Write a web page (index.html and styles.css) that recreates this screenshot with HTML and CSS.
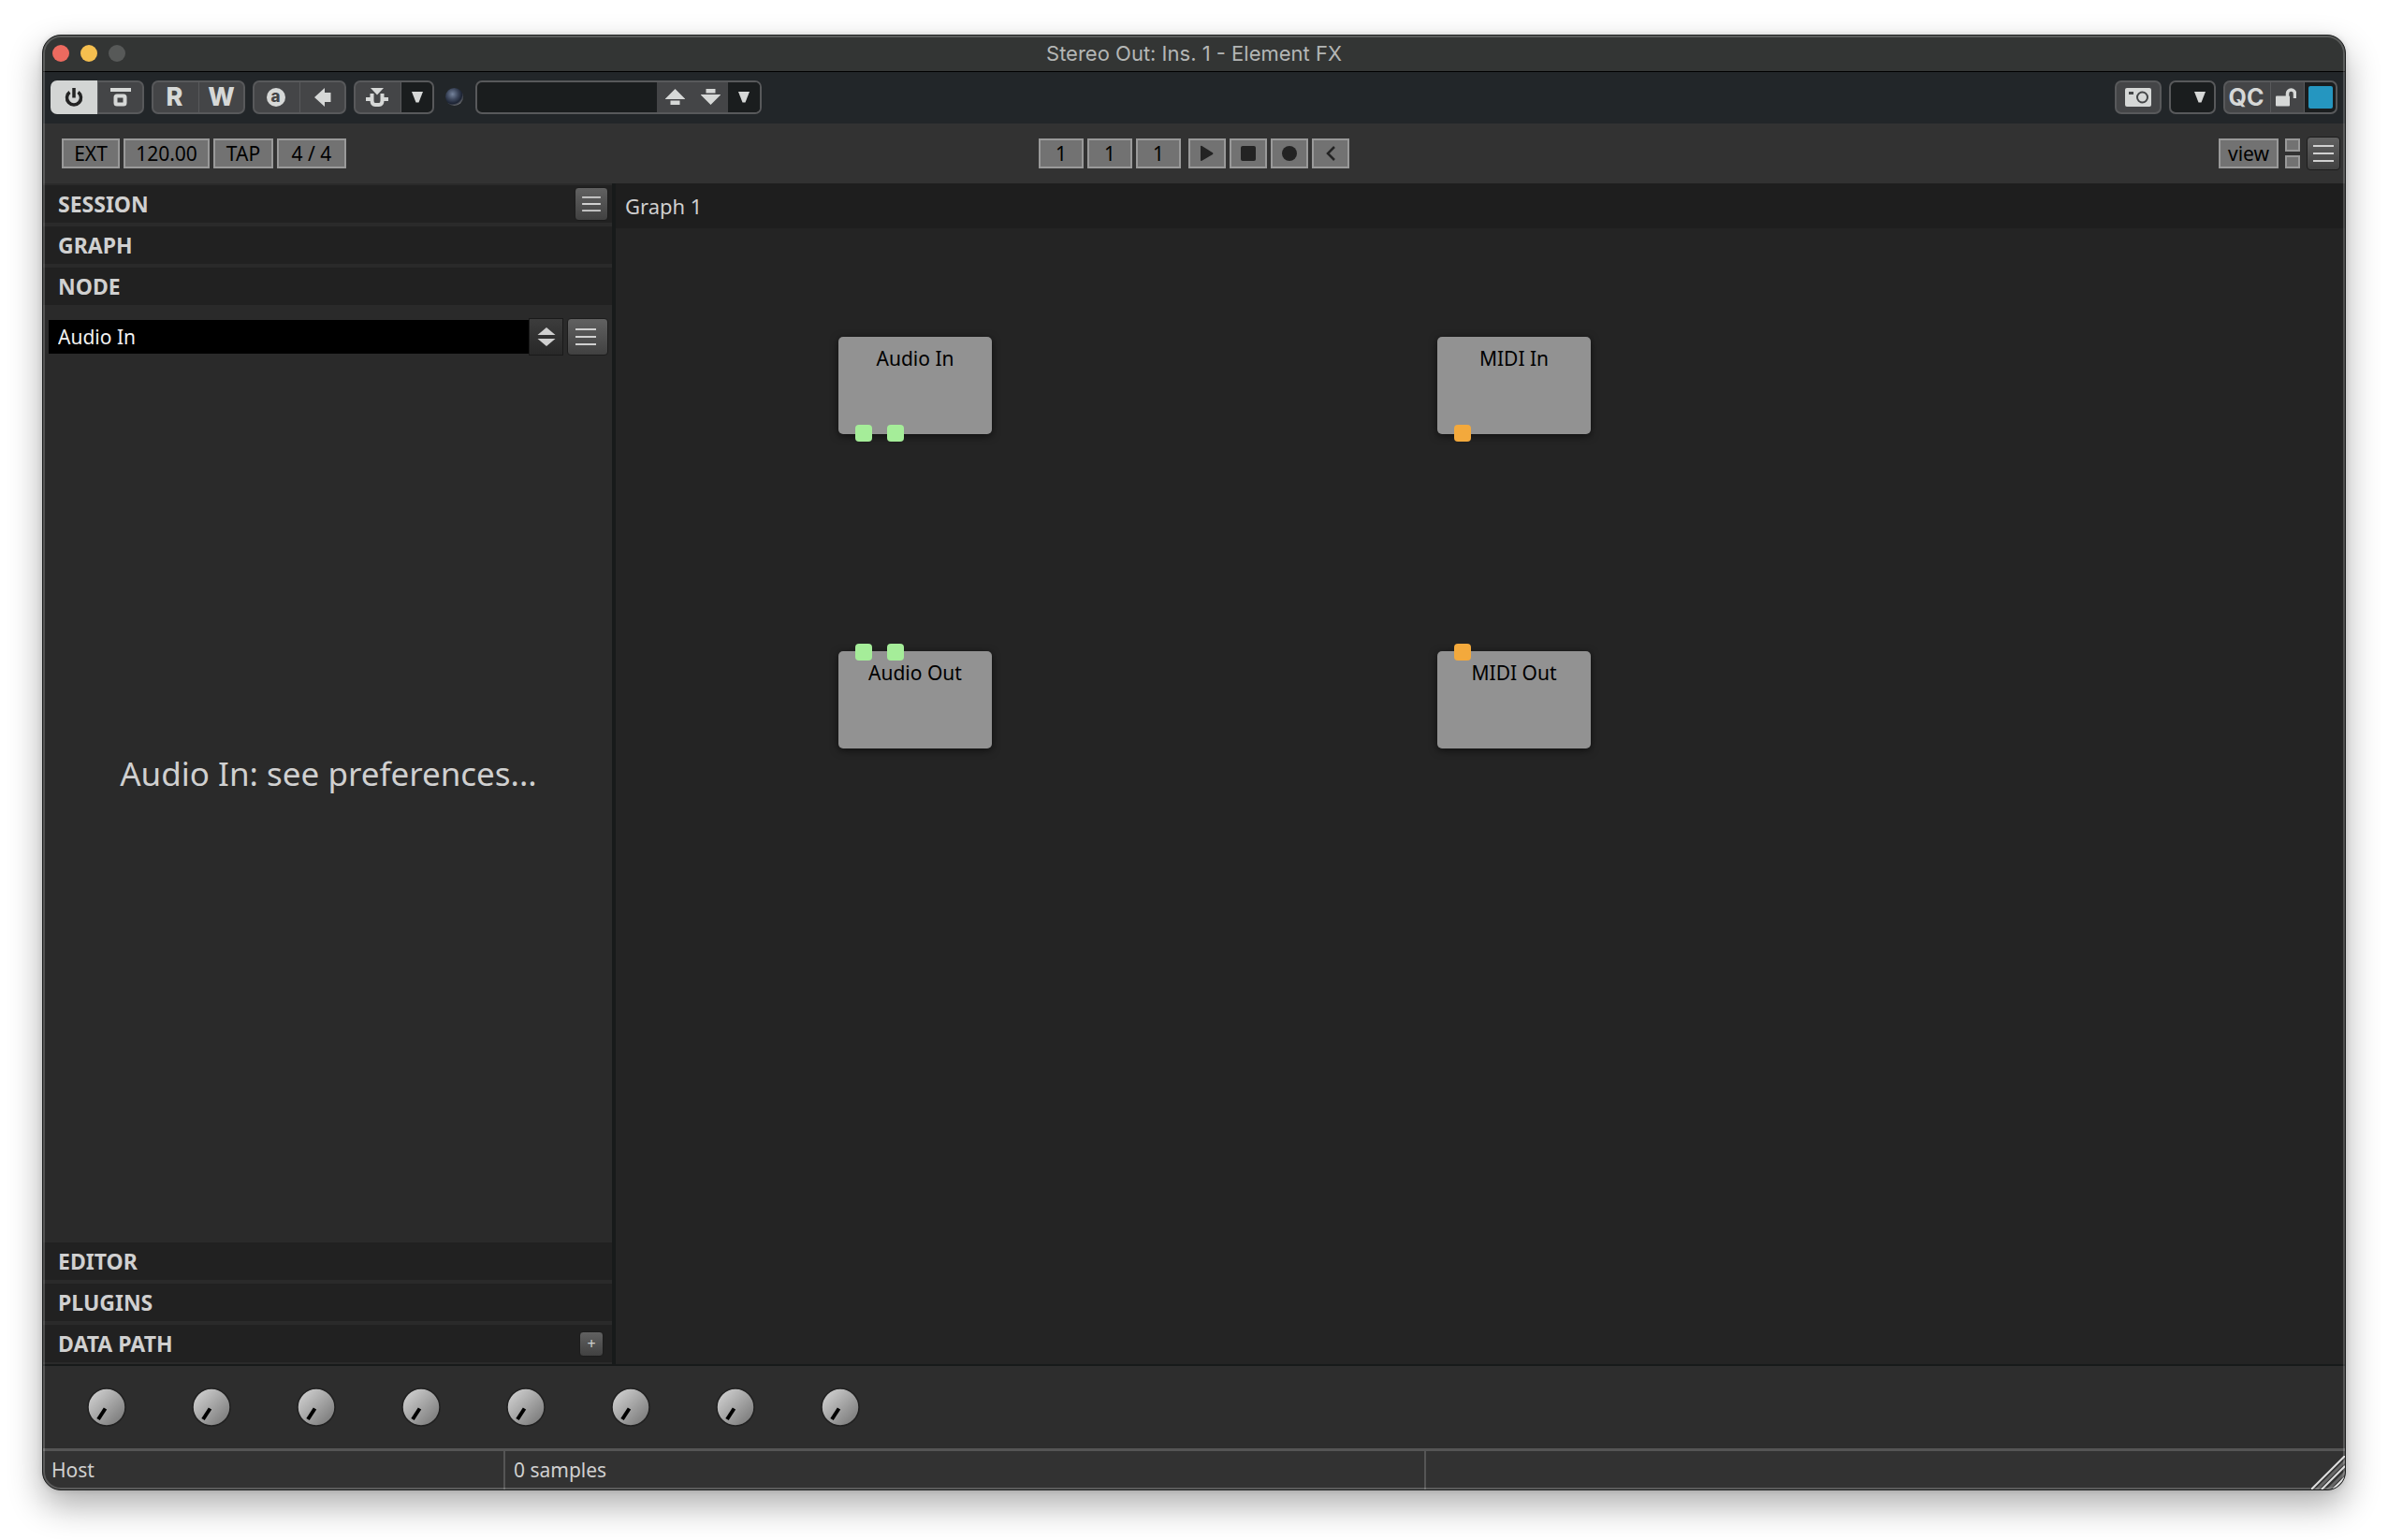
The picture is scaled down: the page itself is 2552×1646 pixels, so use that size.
FILE: index.html
```html
<!DOCTYPE html>
<html lang="en">
<head>
  <meta charset="UTF-8">
  <title>Stereo Out: Ins. 1 - Element FX</title>
  <link rel="stylesheet" href="styles.css">
</head>
<body>
  <svg class="defs" aria-hidden="true">
    <defs>
      <linearGradient id="knobFill" x1="0" y1="0" x2="1" y2="1">
        <stop offset="0.1" stop-color="#cfcfcf"/>
        <stop offset="0.9" stop-color="#7a7a7a"/>
      </linearGradient>
      <symbol id="knob" viewBox="0 0 42 42">
        <circle cx="21" cy="21" r="20" fill="url(#knobFill)" stroke="#202020" stroke-width="1.5"/>
        <path d="M19.500 22.500L12 34" stroke="#000" stroke-width="4"/>
      </symbol>
      <symbol id="lines" viewBox="0 0 24 20">
        <path d="M1 2h22M1 10h22M1 18h22" stroke="#d0d0d0" stroke-width="2"/>
      </symbol>
      <symbol id="down" viewBox="0 0 12 12">
        <path d="M0 0h12L7.500 11.500h-3z" fill="#d6d8d7"/>
      </symbol>
    </defs>
  </svg>

  <main class="window">
    <header class="titlebar">
      <div class="lights">
        <button class="light red" aria-label="Close"></button>
        <button class="light yellow" aria-label="Minimize"></button>
        <button class="light grey" aria-label="Zoom"></button>
      </div>
      <h1>Stereo Out: Ins. 1 - Element FX</h1>
    </header>

    <div class="hostbar">
      <div class="group">
        <button class="active" aria-label="Power">
          <svg width="20" height="22" viewBox="0 0 20 22"><path d="M5.500 5.500a7.500 7.500 0 1 0 9 0M10 1v10.500" fill="none" stroke="#232323" stroke-width="3.500"/></svg>
        </button>
        <button aria-label="Bypass">
          <svg width="22" height="20" viewBox="0 0 22 20"><path d="M0 2h22" stroke="#d6d8d7" stroke-width="4"/><rect x="5.500" y="8.500" width="10" height="9" rx="1.500" fill="none" stroke="#d6d8d7" stroke-width="4"/></svg>
        </button>
      </div>
      <div class="group">
        <button>R</button>
        <button>W</button>
      </div>
      <div class="group">
        <button aria-label="Compare"><span class="letter-a">a</span></button>
        <button aria-label="Previous setting">
          <svg width="18" height="20" viewBox="0 0 18 20"><path d="M0 10L11 0v5h6.500v10H11v5z" fill="#d6d8d7"/></svg>
        </button>
      </div>
      <div class="group">
        <button aria-label="Routing">
          <svg width="24" height="20" viewBox="0 0 24 20"><path d="M5 0h14l-7 7.500z" fill="#d6d8d7"/><path d="M0 12h6M18 12h6" stroke="#d6d8d7" stroke-width="4"/><path d="M6.500 6v7.500q0 4.500 3.500 4.500h4q3.500 0 3.500-4.500V6" fill="none" stroke="#d6d8d7" stroke-width="4"/></svg>
        </button>
        <button class="dark drop" aria-label="Routing menu"><svg width="12" height="12"><use href="#down"/></svg></button>
      </div>
      <span class="led"></span>
      <div class="preset">
        <input type="text" aria-label="Preset">
        <button aria-label="Previous preset">
          <svg width="21" height="17" viewBox="0 0 21 17"><path d="M10.500 0L21 10.500v.5H0v-.5zM5.500 12.500h10V17h-10z" fill="#d6d8d7"/></svg>
        </button>
        <button aria-label="Next preset">
          <svg width="21" height="17" viewBox="0 0 21 17"><path d="M10.500 17L21 6.500V6H0v.5zM5.500 0h10v4.500h-10z" fill="#d6d8d7"/></svg>
        </button>
        <button class="dark" aria-label="Preset list"><svg width="12" height="12"><use href="#down"/></svg></button>
      </div>

      <div class="group push">
        <button aria-label="Snapshot">
          <svg width="28" height="20" viewBox="0 0 28 20"><rect width="28" height="20" rx="2" fill="#d6d8d7"/><path d="M4 5.500h5" stroke="#444648" stroke-width="3"/><circle cx="18.500" cy="10" r="5.500" fill="none" stroke="#444648" stroke-width="2"/></svg>
        </button>
      </div>
      <div class="group">
        <button class="dark right" aria-label="Options"><svg width="12" height="12"><use href="#down"/></svg></button>
      </div>
      <div class="group">
        <button class="qc">QC</button>
        <button class="small" aria-label="Lock">
          <svg width="22" height="20" viewBox="0 0 22 20"><rect y="8.500" width="15" height="11" rx="1" fill="#d6d8d7"/><path d="M12.500 10V6a4 4 0 0 1 8 0v5" fill="none" stroke="#d6d8d7" stroke-width="3.500"/></svg>
        </button>
        <button class="small swatch" aria-label="Colour"><span></span></button>
      </div>
    </div>

    <div class="toolbar">
      <div class="tools">
        <button class="ext">EXT</button>
        <input class="tempo" type="text" value="120.00" aria-label="Tempo">
        <button class="tap">TAP</button>
        <button class="meter">4 / 4</button>
      </div>
      <div class="tools transport">
        <button class="beat">1</button>
        <button class="beat">1</button>
        <button class="beat">1</button>
        <button class="play" aria-label="Play"><svg width="16" height="18" viewBox="0 0 16 18"><path d="M1 1.500v14.500q0 1.500 1.500.8L14 10q1-1 0-1.800L2.500 1Q1 .5 1 1.500z" fill="#232323"/></svg></button>
        <button aria-label="Stop"><svg width="16" height="16"><rect width="16" height="16" rx="2" fill="#232323"/></svg></button>
        <button aria-label="Record"><svg width="16" height="16"><circle cx="8" cy="8" r="8" fill="#232323"/></svg></button>
        <button aria-label="Back to start"><svg width="12" height="16" viewBox="0 0 12 16"><path d="M10 1L3 8l7 7" fill="none" stroke="#232323" stroke-width="2.500"/></svg></button>
      </div>
      <div class="tools end">
        <button class="view">view</button>
        <div class="minis">
          <button aria-label="Upper panel"></button>
          <button aria-label="Lower panel"></button>
        </div>
        <button class="menu" aria-label="Menu"><svg width="24" height="20"><use href="#lines"/></svg></button>
      </div>
    </div>

    <div class="content">
      <aside class="sidebar">
        <section class="panel-head">
          <h2>SESSION</h2>
          <button class="menu" aria-label="Session menu"><svg width="22" height="18"><use href="#lines"/></svg></button>
        </section>
        <section class="panel-head"><h2>GRAPH</h2></section>
        <section class="panel-head"><h2>NODE</h2></section>
        <div class="node-panel">
          <div class="node-row">
            <div class="combo">
              <select aria-label="Node">
                <option>Audio In</option>
                <option>Audio Out</option>
                <option>MIDI In</option>
                <option>MIDI Out</option>
              </select>
              <span class="updown"><svg width="20" height="20" viewBox="0 0 20 20"><path d="M10 0l9.500 8H.5zM10 20l9.500-8H.5z" fill="#d0d0d0"/></svg></span>
            </div>
            <button class="menu wide" aria-label="Node menu"><svg width="26" height="20"><use href="#lines"/></svg></button>
          </div>
          <p class="message">Audio In: see preferences...</p>
        </div>
        <section class="panel-head"><h2>EDITOR</h2></section>
        <section class="panel-head"><h2>PLUGINS</h2></section>
        <section class="panel-head">
          <h2>DATA PATH</h2>
          <button class="menu plus" aria-label="Add path">+</button>
        </section>
      </aside>

      <section class="graph">
        <h2>Graph 1</h2>
        <div class="canvas">
          <div class="node audio-in">Audio In<i class="port"></i><i class="port second"></i></div>
          <div class="node midi-in">MIDI In<i class="port midi"></i></div>
          <div class="node audio-out out">Audio Out<i class="port"></i><i class="port second"></i></div>
          <div class="node midi-out out">MIDI Out<i class="port midi"></i></div>
        </div>
      </section>
    </div>

    <div class="macros">
      <label class="knob"><svg><use href="#knob"/></svg><input type="range" value="0" aria-label="Macro 1"></label>
      <label class="knob"><svg><use href="#knob"/></svg><input type="range" value="0" aria-label="Macro 2"></label>
      <label class="knob"><svg><use href="#knob"/></svg><input type="range" value="0" aria-label="Macro 3"></label>
      <label class="knob"><svg><use href="#knob"/></svg><input type="range" value="0" aria-label="Macro 4"></label>
      <label class="knob"><svg><use href="#knob"/></svg><input type="range" value="0" aria-label="Macro 5"></label>
      <label class="knob"><svg><use href="#knob"/></svg><input type="range" value="0" aria-label="Macro 6"></label>
      <label class="knob"><svg><use href="#knob"/></svg><input type="range" value="0" aria-label="Macro 7"></label>
      <label class="knob"><svg><use href="#knob"/></svg><input type="range" value="0" aria-label="Macro 8"></label>
    </div>

    <footer class="status">
      <span>Host</span>
      <span>0 samples</span>
      <span></span>
    </footer>
    <svg class="resize" viewBox="0 0 36 36" aria-hidden="true">
      <path d="M4 38L38 4M16 38L38 16M28 38L38 28" stroke="#666" stroke-width="3"/>
      <path d="M0 36L36 0M11 36L36 11M23 36L36 23" stroke="#dedede" stroke-width="2"/>
    </svg>
  </main>
</body>
</html>
```

FILE: styles.css
```css
* { box-sizing: border-box; }
body {
  margin: 0;
  padding: 37px 45px 53px;
  min-height: 100vh;
  display: flex;
  background: #fff;
  color: #d0d0d0;
  font-family: "Noto Sans", "DejaVu Sans", sans-serif;
  font-size: 21px;
}
h1, h2, p { margin: 0; }
button, input, select {
  margin: 0;
  padding: 0;
  border: 0;
  border-radius: 0;
  font: inherit;
  color: inherit;
}
button {
  display: flex;
  align-items: center;
  justify-content: center;
}
svg { display: block; }
.defs { position: absolute; width: 0; height: 0; }

.window {
  position: relative;
  flex: 1;
  display: flex;
  flex-direction: column;
  overflow: hidden;
  min-width: 0;
  border: 1px solid #1c1e1e;
  border-radius: 20px;
  background: #2d2d2d;
  box-shadow: 0 16px 36px rgba(0,0,0,0.32), 0 0 6px rgba(0,0,0,0.12);
}
.window::after {
  content: "";
  position: absolute;
  inset: 0;
  border: 2px solid rgba(255,255,255,0.2);
  border-radius: 19px;
  pointer-events: none;
}

/* title bar */
.titlebar {
  height: 39px;
  display: grid;
  grid-template-columns: 1fr auto 1fr;
  align-items: center;
  padding: 0 10px;
  background: #333534;
  border-bottom: 1px solid #000;
}
.titlebar h1 {
  font: 400 22px/36px Inter, sans-serif;
  color: #b4b6b5;
}
.lights { display: flex; gap: 12px; }
.light { width: 18px; height: 18px; border-radius: 50%; }
.red { background: #ed6a5f; }
.yellow { background: #f5bf4f; }
.grey { background: #575958; }

/* host bar */
.hostbar {
  height: 55px;
  display: flex;
  align-items: center;
  gap: 8px;
  padding: 0 8px 2px;
  background: #222629;
}
.group { display: flex; }
.group button {
  width: 50px;
  height: 36px;
  border: 2px solid #58595b;
  background: #444547;
  color: #d6d8d7;
  font: 800 27px/32px Inter, sans-serif;
}
.group button + button { border-left-width: 1px; }
.group button:not(:last-child) { border-right-width: 0; padding-right: 3px; }
.group button:first-child {
  border-top-left-radius: 7px;
  border-bottom-left-radius: 7px;
}
.group button:last-child {
  border-top-right-radius: 7px;
  border-bottom-right-radius: 7px;
}
.group .active { background: #d3d5d4; border-color: #d3d5d4; }
.group .dark { background: #1a1d1e; }
.group .drop { width: 36px; }
.group .right { justify-content: flex-end; padding-right: 9px; }
.group .qc { font-size: 25px; font-weight: 700; }
.group .small { width: 36px; }
.group .swatch { background: #1a1d1e; }
.swatch span { width: 26px; height: 24px; border-radius: 2px; background: #2596c0; }
.letter-a {
  width: 20px;
  height: 20px;
  border-radius: 50%;
  background: #d6d8d7;
  color: #444547;
  font-size: 17px;
  line-height: 18px;
}
.led {
  width: 19px;
  height: 19px;
  margin: 0 5px 0 4px;
  border-radius: 50%;
  background: radial-gradient(circle at 40% 35%, #75839c 0, #3d475c 35%, #1c2333 60%, #6b6d70 75%);
}
.preset {
  display: flex;
  width: 306px;
  height: 36px;
  border: 2px solid #58595b;
  border-radius: 7px;
  overflow: hidden;
  background: #1a1d1e;
}
.preset input { flex: 1; min-width: 0; background: none; }
.preset button { width: 38px; background: #444547; }
.preset .dark { width: 34px; background: #1a1d1e; }
.push { margin-left: auto; }

/* toolbar */
.toolbar {
  height: 64px;
  display: grid;
  grid-template-columns: 1fr auto 1fr;
  align-items: center;
  padding: 0 5px 0 20px;
  background: #323232;
}
.tools { display: flex; align-items: center; gap: 4px; color: #000; }
.tools button, .tools input {
  width: 40px;
  height: 32px;
  border: 2px solid #999;
  background: #727272;
  text-align: center;
}
.tools .ext { width: 62px; }
.tools .tempo { width: 92px; }
.tools .tap { width: 64px; }
.tools .meter { width: 74px; }
.tools .beat { width: 48px; }
.tools .play { margin-left: 4px; }
.tools .view { width: 64px; }
.transport { margin-left: -15px; }
.end { justify-content: flex-end; gap: 7px; }
.minis { display: grid; gap: 4px; }
.tools .minis button { width: 16px; height: 14px; }
.menu, .tools .menu {
  width: 36px;
  height: 36px;
  border: 1px solid #1c1c1c;
  border-radius: 4px;
  background: linear-gradient(#616161, #414141);
}

/* sidebar */
.content { flex: 1; display: flex; border-bottom: 2px solid #171a1a; }
.sidebar {
  width: 612px;
  display: flex;
  flex-direction: column;
  gap: 4px;
  padding: 2px 0;
  background: #2a2a2a;
  border-right: 4px solid #171a1a;
}
.panel-head {
  height: 40px;
  display: flex;
  align-items: center;
  justify-content: space-between;
  padding: 0 4px 0 16px;
  background: #212121;
}
.panel-head h2 { font-size: 23px; line-height: 40px; font-weight: 700; }
.panel-head .plus {
  width: 26px;
  height: 27px;
  margin-right: 5px;
  font-size: 16px;
  line-height: 20px;
}
.node-panel {
  flex: 1;
  display: flex;
  flex-direction: column;
  padding: 10px 4px 0 6px;
}
.node-row { display: flex; gap: 4px; }
.combo { flex: 1; display: flex; align-items: center; }
.combo select {
  flex: 1;
  height: 36px;
  padding: 0 10px;
  appearance: none;
  background: #000;
  color: #f2f2f2;
}
.updown {
  width: 37px;
  height: 40px;
  display: flex;
  align-items: center;
  justify-content: center;
  border: 1px solid #1a1a1a;
  background: linear-gradient(#3c3c3c, #282828);
}
.menu.wide { width: 44px; height: 40px; padding-right: 4px; }
.message { margin: auto; padding-bottom: 50px; font-size: 35px; line-height: 48px; }

/* graph */
.graph { flex: 1; display: flex; flex-direction: column; }
.graph h2 {
  height: 48px;
  padding-left: 10px;
  background: #1e1e1e;
  font-size: 22px;
  line-height: 48px;
  font-weight: 400;
}
.canvas { position: relative; flex: 1; background: #242424; }
.node {
  position: absolute;
  width: 164px;
  height: 104px;
  padding-top: 9px;
  border-radius: 5px;
  background: #929292;
  box-shadow: 0 2px 8px rgba(0,0,0,0.6);
  color: #000;
  line-height: 28px;
  text-align: center;
}
.audio-in { left: 238px; top: 116px; }
.midi-in { left: 878px; top: 116px; }
.audio-out { left: 238px; top: 452px; }
.midi-out { left: 878px; top: 452px; }
.port {
  position: absolute;
  left: 18px;
  bottom: -8px;
  width: 18px;
  height: 18px;
  border-radius: 4px;
  background: #a5ed99;
}
.out .port { top: -8px; bottom: auto; }
.second { left: 52px; }
.midi { background: #f3a93c; }

/* macros and status bar */
.macros {
  height: 88px;
  display: flex;
  align-items: center;
  gap: 70px;
  padding-left: 47px;
}
.knob { position: relative; width: 42px; height: 42px; }
.knob svg { width: 42px; height: 42px; }
.knob input {
  position: absolute;
  inset: 0;
  width: 42px;
  height: 42px;
  opacity: 0;
}
.status {
  height: 44px;
  display: grid;
  grid-template-columns: 20% 40% 40%;
  border-top: 3px solid #555;
  background: #323232;
  line-height: 40px;
}
.status span { padding-left: 9px; }
.status span + span { border-left: 2px solid #555; }
.resize {
  position: absolute;
  right: 0;
  bottom: 0;
  width: 36px;
  height: 36px;
}
```
